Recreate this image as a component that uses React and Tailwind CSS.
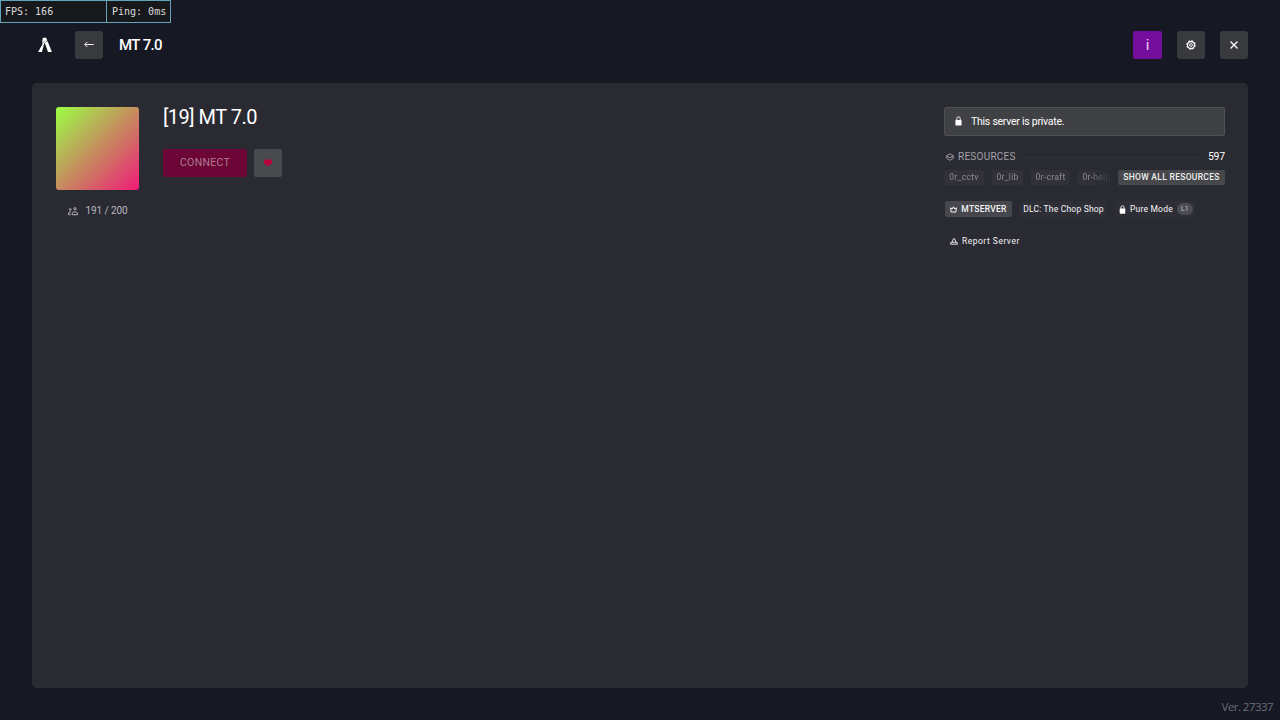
import React from 'react';

const resources = [
  { name: '0r_cctv', box: 'w-[40px]' },
  { name: '0r_lib', box: 'w-[31px]' },
  { name: '0r-craft', box: 'w-[39px]' },
  { name: '0r-help', box: 'w-[37px]' },
];

const LogoIcon = () => (
  <svg width="14" height="16" viewBox="0 0 14 16" fill="#fff">
    <path d="M4.9 0.8H8.2L9.2 3.4L4 8.5L4.2 6.7L7.6 3.1L3.9 6.1Z" />
    <path d="M3.4 8.9L6.4 6.1L3.9 15H0.1Z" />
    <path d="M6.8 6L9.5 3.9L13.9 15H10Z" />
  </svg>
);

const BackIcon = () => (
  <svg width="10" height="10" viewBox="0 0 10 10" fill="none" stroke="currentColor" strokeWidth="1">
    <path d="M9.6 4.5H0.9M3.3 2L0.8 4.5L3.3 7" />
  </svg>
);

const GearIcon = () => (
  <svg width="10" height="10" viewBox="0 0 10 10" fill="none" stroke="currentColor">
    <circle cx="5" cy="5" r="3.5" strokeWidth="1.3" />
    <circle cx="5" cy="5" r="4.4" strokeWidth="0.9" strokeDasharray="1.7 1.755" />
    <circle cx="5" cy="5" r="1.4" strokeWidth="0.9" />
  </svg>
);

const CloseIcon = () => (
  <svg width="8" height="8" viewBox="0 0 8 8" stroke="currentColor" strokeWidth="1.3">
    <path d="M0.5 0.5L7.5 7.5M7.5 0.5L0.5 7.5" />
  </svg>
);

const HeartIcon = () => (
  <svg width="8" height="8" viewBox="0 0 8 8" fill="#b5063f">
    <path d="M0.6 0.4H3.2L4 0.9L4.8 0.4H7.4L8 1V4.2L4 7.6L0 4.2V1Z" />
  </svg>
);

const PlayersIcon = () => (
  <svg width="10" height="9" viewBox="0 0 10 9" fill="none" stroke="currentColor" strokeWidth="1">
    <circle cx="2.3" cy="2.5" r="0.9" />
    <circle cx="7" cy="1.7" r="1.1" />
    <path d="M3 5H1.4L0.6 6V7.7H2.6M4.2 7.7V6.2L5.4 4.9H8.3L9.5 6.2V7.7Z" />
  </svg>
);

const LockIcon = ({ className }) => (
  <svg className={className} viewBox="0 0 7 10">
    <path d="M1.8 4.5V2.5C1.8 0.3 5.2 0.3 5.2 2.5V4.5" fill="none" stroke="#fff" />
    <rect x="0.4" y="4" width="6.2" height="5.6" rx="0.8" fill="#fff" />
  </svg>
);

const LayersIcon = () => (
  <svg width="8" height="8" viewBox="0 0 8 8" fill="none" stroke="currentColor" strokeWidth="0.9">
    <path d="M4 0.8L7.3 2.8L4 4.8L0.7 2.8ZM0.7 2.8V5.3L4 7.3L7.3 5.3V2.8" />
  </svg>
);

const CrownIcon = () => (
  <svg width="7" height="7" viewBox="0 0 7 7" fill="none" stroke="currentColor" strokeWidth="1">
    <path d="M1.1 6L0.6 1.8L2.2 3L3.5 0.8L4.8 3L6.4 1.8L5.9 6Z" />
  </svg>
);

const ReportIcon = () => (
  <svg width="8" height="7" viewBox="0 0 8 7" fill="none" stroke="currentColor" strokeWidth="0.9">
    <path d="M3.4 0.8H4.6L6 4.2L7.4 4.8V6.2H0.6V4.8L2 4.2ZM2 4.3H6" />
  </svg>
);

const App = () => {
  return (
    <div className="relative flex h-screen w-full flex-col overflow-hidden bg-[#161923] font-[Roboto,sans-serif] text-white">
      {/* Performance overlay */}
      <div className="absolute left-0 top-0 flex h-[23px] w-[171px] border border-[#64a3b9] bg-[#17181c] font-['DejaVu_Sans_Mono',monospace] text-[10px] leading-[22px] text-[#dcdcdc]">
        <div className="w-[106px] border-r border-[#64a3b9] pl-[4px]">FPS: 166</div>
        <div className="whitespace-nowrap pl-[5px]">Ping: 0ms</div>
      </div>

      {/* Top bar */}
      <header className="flex h-[83px] shrink-0 items-center px-8 pt-[7px]">
        <div className="ml-[6px] w-[37px]">
          <LogoIcon />
        </div>
        <button className="flex size-7 items-center justify-center rounded-[3px] bg-[#393a3e]">
          <BackIcon />
        </button>
        <h1 className="ml-4 text-[15px] font-medium leading-5 tracking-[-0.6px]">MT 7.0</h1>
        <div className="ml-auto flex items-center">
          <button className="flex h-7 w-[29px] items-center justify-center rounded-[2px] bg-[#750d9c] text-[15px] text-[#ead4f1]">
            i
          </button>
          <button className="ml-[15px] flex size-7 items-center justify-center rounded-[3px] bg-[#393a3e]">
            <GearIcon />
          </button>
          <button className="ml-[15px] flex size-7 items-center justify-center rounded-[3px] bg-[#393a3e]">
            <CloseIcon />
          </button>
        </div>
      </header>

      <main className="mx-8 flex h-[605px] shrink-0 rounded-[5px] bg-[#2a2a33] pl-6 pr-[23px] pt-6">
        <div className="w-[83px]">
          <div className="size-[83px] rounded-[3px] bg-linear-to-br/srgb from-[#9bff45] to-[#f01b78]" />
          <div className="mt-[13px] flex items-center justify-center text-[10px] leading-4 text-[#b9b9bd]">
            <PlayersIcon />
            <span className="ml-2 tracking-[-0.1px]">191 / 200</span>
          </div>
        </div>

        <div className="ml-6">
          <h2 className="h-5 text-[20px] leading-[21px] tracking-[-0.5px]">[19] MT 7.0</h2>
          <div className="mt-[22px] flex gap-[7px]">
            <button className="h-7 w-[84px] rounded-[2px] bg-[#6b0637] text-[10.5px] tracking-[0.3px] text-[#b27a94]">
              CONNECT
            </button>
            <button className="flex size-7 items-center justify-center rounded-[2px] bg-[#494a4d]">
              <HeartIcon />
            </button>
          </div>
        </div>

        <aside className="ml-auto w-[281px]">
          <div className="flex h-[29px] items-center rounded-[2px] border border-[#505154] bg-[#404144] pl-[10px]">
            <LockIcon className="-mt-px h-[10px] w-[7px]" />
            <span className="ml-[9px] text-[10.5px] tracking-[-0.25px]">This server is private.</span>
          </div>

          <div className="mt-[13px] flex h-4 items-center text-[10px]">
            <span className="ml-[2px] text-[#a4a4a9]">
              <LayersIcon />
            </span>
            <span className="ml-[4px] leading-[14px] tracking-[0.25px] text-[#a4a4a9]">RESOURCES</span>
            <span className="mx-2 h-px flex-1 bg-[#31313a]" />
            <span className="text-[10.5px] tracking-[-0.2px]">597</span>
          </div>

          <div className="mt-[5px] flex h-[15px] items-center">
            <div className="flex w-[168px] gap-2 overflow-hidden mask-r-from-86% mask-r-to-100%">
              {resources.map((item) => (
                <div
                  key={item.name}
                  className={`h-[15px] shrink-0 rounded-[2px] bg-[#313139] text-center text-[8.5px] leading-[15px] tracking-[0.3px] text-[#8c8c91] ${item.box}`}
                >
                  {item.name}
                </div>
              ))}
            </div>
            <button className="ml-auto h-[15px] w-[107px] rounded-[2px] bg-[#47484b] text-[8.5px] font-medium leading-[15px] tracking-[0.3px] text-[#efefef]">
              SHOW ALL RESOURCES
            </button>
          </div>

          <div className="mt-4 flex h-4 items-center text-[8.5px] leading-4 text-[#f4f4f5]">
            <div className="ml-px flex h-4 w-[67px] items-center justify-center rounded-[2px] bg-[#47484e]">
              <CrownIcon />
              <span className="ml-[4px] font-medium tracking-[0.25px]">MTSERVER</span>
            </div>
            <div className="ml-2 h-4 w-[87px] rounded-[2px] bg-[#2e2e37] text-center tracking-[0.2px]">
              DLC: The Chop Shop
            </div>
            <div className="ml-2 flex h-4 w-[80px] items-center rounded-[2px] bg-[#2e2e37] pl-[4px]">
              <LockIcon className="h-[9px] w-[7px]" />
              <span className="ml-[4px] tracking-[0.2px]">Pure Mode</span>
              <span className="ml-[4px] h-3 w-4 rounded-full bg-[#4c4d52] text-center text-[7px] leading-3 text-[#c4c4c8]">
                L1
              </span>
            </div>
          </div>

          <div className="ml-[6px] mt-4 flex h-4 items-center text-[8.5px] text-[#f4f4f5]">
            <ReportIcon />
            <span className="ml-[4px] tracking-[0.5px]">Report Server</span>
          </div>
        </aside>
      </main>

      <footer className="pr-[7px] pt-[10px] text-right font-['Open_Sans',sans-serif] text-[11.5px] leading-[18px] tracking-[-0.55px] text-[#6c6d76]">
        Ver. 27337
      </footer>
    </div>
  );
};

export default App;
